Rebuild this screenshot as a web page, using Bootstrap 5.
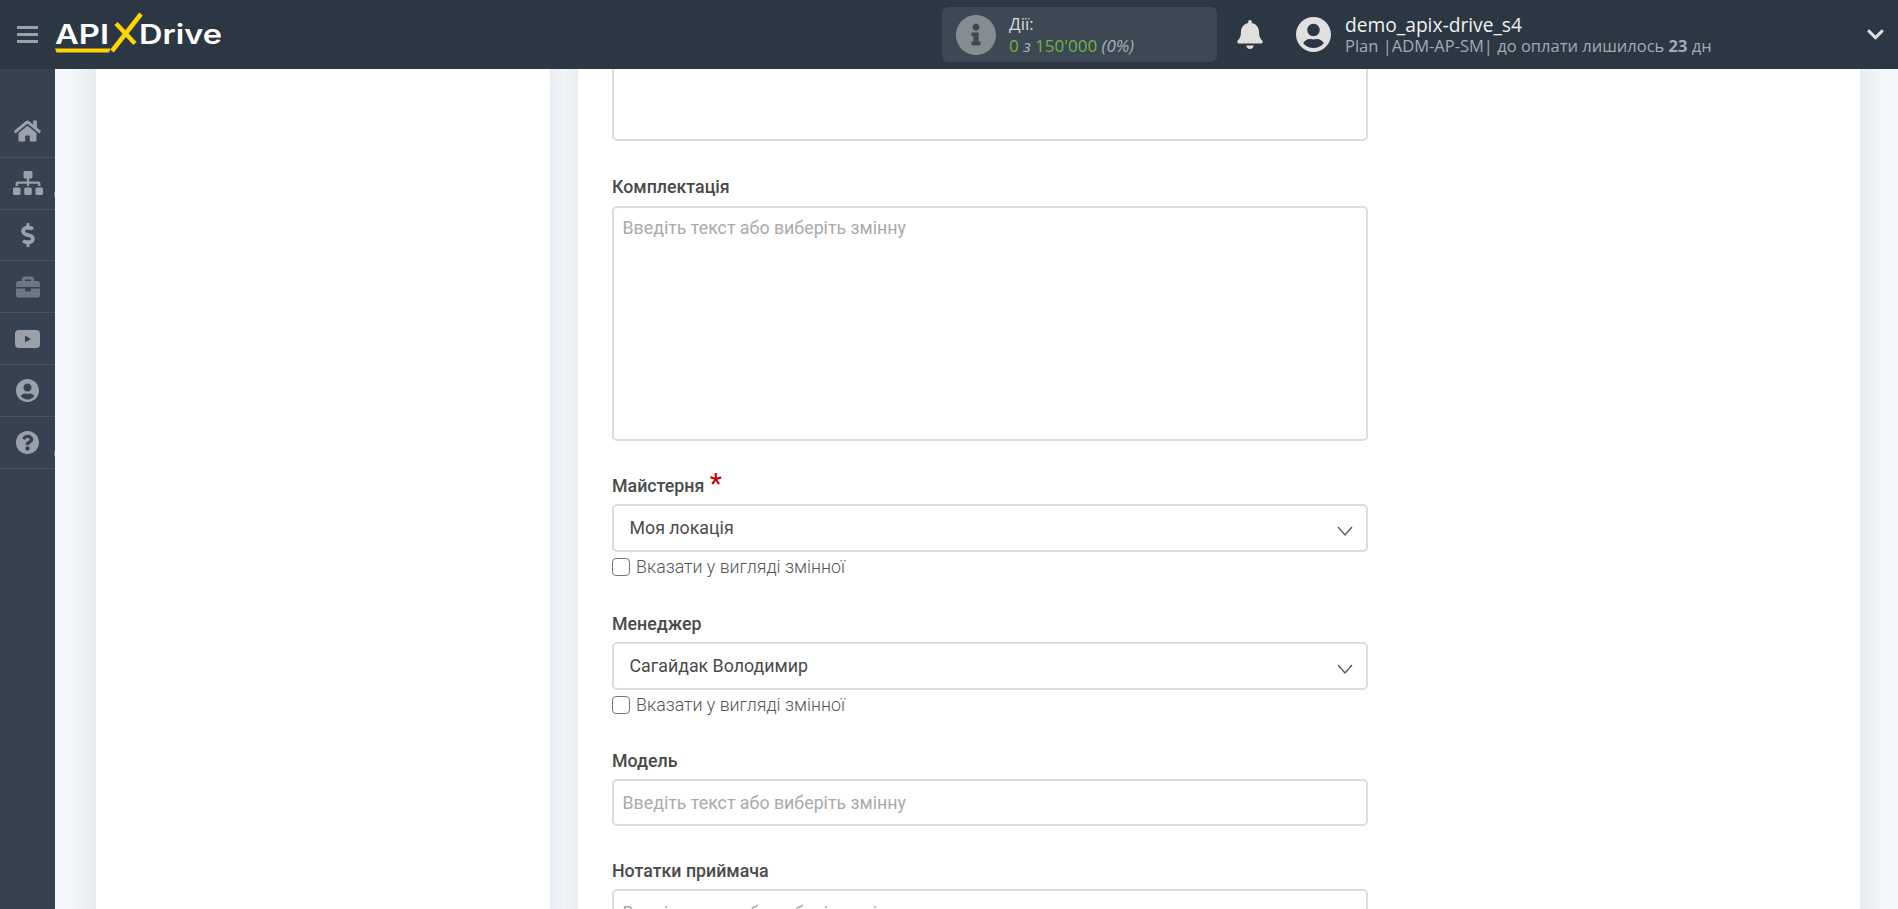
<!DOCTYPE html>
<html lang="uk">
<head>
<meta charset="utf-8">
<title>ApiX-Drive</title>
<link href="https://cdn.jsdelivr.net/npm/bootstrap@5.3.0/dist/css/bootstrap.min.css" rel="stylesheet">
<style>
html,body{height:100%;overflow:hidden}
body{font-family:Roboto,"Liberation Sans",sans-serif;background:#f3f6fb}
.top-bar{height:69px;background:#2c3744;font-family:"Open Sans","Liberation Sans",sans-serif}
.burger{width:21px;margin-left:17px;margin-right:17px}
.burger i{display:block;height:3.5px;background:#9ba1a8;margin-bottom:3.5px}
.burger i:last-child{margin-bottom:0}
.brand{width:170px;height:44px;margin-top:-4px}
.brand text{font-family:Inter,"Liberation Sans",sans-serif;font-weight:600;fill:#fff}
.action-box{width:275px;height:55px;margin-left:717px;background:#3c4853;border-radius:6px;padding-left:14px}
.action-box svg{width:40px;height:40px;fill:#858c92}
.action-txt{margin-left:13px;font-size:17px;line-height:22px;color:#d9dcdf}
.action-num{color:#77b341}
.action-mut{color:#a9afb5;font-style:italic}
.bell{width:26px;height:29px;fill:#e0e0e0;margin-left:20px}
.avatar{width:35px;height:35px;fill:#e0e0e0;margin-left:33px}
.user-txt{margin-left:14px}
.user-name{font-size:19.2px;line-height:22px;color:#f0f1f2}
.user-plan{font-size:16.5px;line-height:20px;color:#a4aab0}
.user-plan b{font-weight:700}
.caret-down{width:19px;height:19px;fill:#e0e0e0;margin-left:auto;margin-right:13px}
.page-body{height:840px}
.side-nav{width:55px;background:#364250;padding-top:37px;flex:none}
.side-item{height:51.8px;border-bottom:1px solid #49545f;position:relative}
.side-item svg{fill:#9ba1a8}
.side-item.dim svg{fill:#6f7783}
.side-item.tick::after{content:"";position:absolute;right:0;top:34px;width:1px;height:5px;background:#7d858d}
.work-area{padding-left:41px;padding-right:38px;background:linear-gradient(90deg,#f3f6fb 0,#f3f6fb 16px,#e8ebf0 41px,#e8ebf0 calc(100% - 38px),#f3f6fb calc(100% - 14px))}
.panel-left{width:454px;background:#fff;flex:none}
.panel-gap{width:28px;background:linear-gradient(90deg,#e9edf2,#f1f4f9 50%,#e9edf2);flex:none}
.panel-main{flex:1 1 auto;background:#fff;padding-left:34px;overflow:hidden}
.form-wrap{width:756px}
.fld-label{font-size:17.8px;font-weight:500;line-height:24px;color:#4a4a4a;margin:0 0 7px;display:block}
.req{color:#c8000a;font-size:27px;line-height:16px;vertical-align:-1px;margin-left:1px}
.form-control.fld,.form-select.fld{border:2px solid #dcdcdc;border-radius:5px;font-size:17.8px;color:#4a4a4a;box-shadow:none}
.form-control.fld{padding:6px 8.5px}
textarea.form-control.fld{padding-top:7px}
.form-control.fld::placeholder{color:#aaa;opacity:1}
.form-select.fld{height:48px;padding:6px 40px 6px 15.5px;background-position:right 13px top 20px;background-size:16px 10px;background-image:url("data:image/svg+xml,%3csvg xmlns='http://www.w3.org/2000/svg' viewBox='0 0 16 10'%3e%3cpath fill='none' stroke='%23555555' stroke-width='1.2' d='M1 1l7 8 7-8'/%3e%3c/svg%3e")}
textarea.fld{resize:none}
.area-cut{height:92px;margin-top:-20px}
.area-big{height:235px}
.inp-tall{height:47px}
.grp-a{margin-top:34px}
.grp-b{margin-top:33px}
.grp-c{margin-top:33px}
.grp-d{margin-top:32px}
.lbl-tight{margin-bottom:6px}
.var-check{margin:3px 0 0;min-height:0;padding:0;display:flex;align-items:center;line-height:24px}
.var-check .form-check-input{float:none;margin:0;width:18px;height:18px;border:1.5px solid #777;border-radius:4px;box-shadow:none}
.var-check .form-check-label{margin-left:6px;font-size:17.8px;font-weight:300;color:#555}
</style>
</head>
<body>
<header class="top-bar d-flex align-items-center">
  <div class="burger"><i></i><i></i><i></i></div>
  <svg class="brand" viewBox="0 0 170 44">
    <text x="0" y="32.500" font-size="27.5" textLength="54" lengthAdjust="spacingAndGlyphs">API</text>
    <path d="M0 37.500h55.500l-1.500 4H1.500z" fill="#ffd400"/>
    <path d="M57 40L86 3" stroke="#ffd400" stroke-width="4.500" fill="none"/>
    <path d="M61 12.500L80 32.500" stroke="#ffd400" stroke-width="4.500" fill="none"/>
    <text x="84" y="32.500" font-size="27.500" textLength="83" lengthAdjust="spacingAndGlyphs">Drive</text>
  </svg>
  <div class="action-box d-flex align-items-center">
    <svg viewBox="8 8 496 496"><path d="M256 8C119.043 8 8 119.083 8 256c0 136.997 111.043 248 248 248s248-111.003 248-248C504 119.083 392.957 8 256 8zm0 110c23.196 0 42 18.804 42 42s-18.804 42-42 42-42-18.804-42-42 18.804-42 42-42zm56 254c0 6.627-5.373 12-12 12h-88c-6.627 0-12-5.373-12-12v-24c0-6.627 5.373-12 12-12h12v-64h-12c-6.627 0-12-5.373-12-12v-24c0-6.627 5.373-12 12-12h64c6.627 0 12 5.373 12 12v100h12c6.627 0 12 5.373 12 12v24z"/></svg>
    <div class="action-txt">
      <div>Дії:</div>
      <div><span class="action-num">0</span> <span class="action-mut">з</span> <span class="action-num">150'000</span> <span class="action-mut">(0%)</span></div>
    </div>
  </div>
  <svg class="bell" viewBox="0 0 448 512"><path d="M224 512c35.32 0 63.97-28.65 63.97-64H160.03c0 35.35 28.65 64 63.97 64zm215.39-149.71c-19.32-20.76-55.47-51.99-55.47-154.29 0-77.7-54.48-139.9-127.94-155.16V32c0-17.67-14.32-32-31.98-32s-31.98 14.33-31.98 32v20.84C118.56 68.1 64.08 130.3 64.08 208c0 102.3-36.15 133.53-55.47 154.29-6 6.45-8.66 14.16-8.61 21.71.11 16.4 12.98 32 32.1 32h383.8c19.12 0 32-15.6 32.1-32 .05-7.55-2.61-15.27-8.61-21.71z"/></svg>
  <svg class="avatar" viewBox="0 8 496 496"><path d="M248 8C111 8 0 119 0 256s111 248 248 248 248-111 248-248S385 8 248 8zm0 96c48.6 0 88 39.4 88 88s-39.4 88-88 88-88-39.4-88-88 39.4-88 88-88zm0 344c-58.7 0-111.3-26.6-146.5-68.2 18.8-35.4 55.6-59.8 98.5-59.8 2.4 0 4.8.4 7.1 1.1 13 4.2 26.6 6.9 40.9 6.9 14.3 0 28-2.7 40.9-6.9 2.3-.7 4.7-1.1 7.1-1.1 42.9 0 79.7 24.4 98.5 59.8C359.3 421.4 306.7 448 248 448z"/></svg>
  <div class="user-txt">
    <div class="user-name">demo_apix-drive_s4</div>
    <div class="user-plan">Plan |ADM-AP-SM| до оплати лишилось <b>23</b> дн</div>
  </div>
  <svg class="caret-down" viewBox="0 0 448 512"><path d="M207.029 381.476L12.686 187.132c-9.373-9.373-9.373-24.569 0-33.941l22.667-22.667c9.357-9.357 24.522-9.375 33.901-.04L224 284.505l154.745-154.021c9.379-9.335 24.544-9.317 33.901.04l22.667 22.667c9.373 9.373 9.373 24.569 0 33.941L240.971 381.476c-9.373 9.372-24.569 9.372-33.942 0z"/></svg>
</header>
<div class="page-body d-flex">
  <nav class="side-nav">
    <div class="side-item d-flex align-items-center justify-content-center"><svg width="27" height="24" viewBox="0 0 576 512"><path d="M280.37 148.26L96 300.11V464a16 16 0 0 0 16 16l112.06-.29a16 16 0 0 0 15.92-16V368a16 16 0 0 1 16-16h64a16 16 0 0 1 16 16v95.64a16 16 0 0 0 16 16.05L464 480a16 16 0 0 0 16-16V300L295.67 148.26a12.19 12.19 0 0 0-15.3 0zM571.6 251.47L488 182.56V44.05a12 12 0 0 0-12-12h-56a12 12 0 0 0-12 12v72.61L318.47 43a48 48 0 0 0-61 0L4.34 251.47a12 12 0 0 0-1.6 16.9l25.5 31A12 12 0 0 0 45.15 301l235.22-193.74a12.19 12.19 0 0 1 15.3 0L530.9 301a12 12 0 0 0 16.9-1.6l25.5-31a12 12 0 0 0-1.7-16.93z"/></svg></div>
    <div class="side-item tick d-flex align-items-center justify-content-center"><svg width="30" height="24" viewBox="0 0 640 512"><path d="M128 352H32c-17.67 0-32 14.33-32 32v96c0 17.67 14.33 32 32 32h96c17.67 0 32-14.33 32-32v-96c0-17.67-14.33-32-32-32zm-24-80h192v48h48v-48h192v48h48v-57.59c0-21.17-17.23-38.41-38.41-38.41H344v-64h40c17.67 0 32-14.33 32-32V32c0-17.67-14.33-32-32-32H256c-17.67 0-32 14.33-32 32v96c0 17.67 14.33 32 32 32h40v64H94.41C73.23 224 56 241.23 56 262.41V320h48v-48zm264 80h-96c-17.67 0-32 14.33-32 32v96c0 17.67 14.33 32 32 32h96c17.67 0 32-14.33 32-32v-96c0-17.67-14.33-32-32-32zm240 0h-96c-17.67 0-32 14.33-32 32v96c0 17.67 14.33 32 32 32h96c17.67 0 32-14.33 32-32v-96c0-17.67-14.33-32-32-32z"/></svg></div>
    <div class="side-item d-flex align-items-center justify-content-center"><svg width="14" height="24" viewBox="0 0 288 512"><path d="M209.2 233.4l-108-31.6C88.7 198.2 80 186.5 80 173.5c0-16.3 13.2-29.5 29.5-29.5h66.3c12.2 0 24.2 3.7 34.2 10.5 6.1 4.1 14.3 3.1 19.5-2l34.8-34c7.1-6.9 6.1-18.4-1.8-24.5C238 74.8 207.4 64.1 176 64V16c0-8.8-7.2-16-16-16h-32c-8.8 0-16 7.2-16 16v48h-2.5C45.8 64-5.4 118.7.5 183.6c4.2 46.1 39.4 83.6 83.8 96.6l102.5 30c12.5 3.7 21.2 15.3 21.2 28.3 0 16.3-13.2 29.5-29.5 29.5h-66.3C100 368 88 364.3 78 357.5c-6.1-4.1-14.3-3.1-19.5 2l-34.8 34c-7.1 6.9-6.1 18.4 1.8 24.5 24.5 19.2 55.1 29.9 86.5 30v48c0 8.8 7.2 16 16 16h32c8.8 0 16-7.2 16-16v-48.2c46.6-.9 90.3-28.6 105.7-72.7 21.5-61.6-14.6-124.8-72.5-141.7z"/></svg></div>
    <div class="side-item dim d-flex align-items-center justify-content-center"><svg width="24" height="24" viewBox="0 0 512 512"><path d="M320 336c0 8.84-7.16 16-16 16h-96c-8.84 0-16-7.16-16-16v-48H0v144c0 25.6 22.4 48 48 48h416c25.6 0 48-22.4 48-48V288H320v48zm144-208h-80V80c0-25.6-22.4-48-48-48H176c-25.6 0-48 22.4-48 48v48H48c-25.6 0-48 22.4-48 48v80h512v-80c0-25.6-22.4-48-48-48zm-144 0H192V96h128v32z"/></svg></div>
    <div class="side-item d-flex align-items-center justify-content-center"><svg width="25" height="18" viewBox="0 0 25 18"><path fill-rule="evenodd" d="M4 0h17a4 4 0 0 1 4 4v10a4 4 0 0 1-4 4H4a4 4 0 0 1-4-4V4a4 4 0 0 1 4-4zm6 5.500v7l6-3.500z"/></svg></div>
    <div class="side-item d-flex align-items-center justify-content-center"><svg width="23" height="23" viewBox="0 8 496 496"><path d="M248 8C111 8 0 119 0 256s111 248 248 248 248-111 248-248S385 8 248 8zm0 96c48.6 0 88 39.4 88 88s-39.4 88-88 88-88-39.4-88-88 39.4-88 88-88zm0 344c-58.7 0-111.3-26.6-146.5-68.2 18.8-35.4 55.6-59.8 98.5-59.8 2.4 0 4.8.4 7.1 1.1 13 4.2 26.6 6.9 40.9 6.9 14.3 0 28-2.7 40.9-6.9 2.3-.7 4.7-1.1 7.1-1.1 42.9 0 79.7 24.4 98.5 59.8C359.3 421.4 306.7 448 248 448z"/></svg></div>
    <div class="side-item tick d-flex align-items-center justify-content-center"><svg width="23" height="23" viewBox="8 8 496 496"><path d="M504 256c0 136.997-111.043 248-248 248S8 392.997 8 256C8 119.083 119.043 8 256 8s248 111.083 248 248zM262.655 90c-54.497 0-89.255 22.957-116.549 63.758-3.536 5.286-2.353 12.415 2.715 16.258l34.699 26.31c5.205 3.947 12.621 3.008 16.665-2.122 17.864-22.658 30.113-35.797 57.303-35.797 20.429 0 45.698 13.148 45.698 32.958 0 14.976-12.363 22.667-32.534 33.976C247.128 238.528 216 254.941 216 296v4c0 6.627 5.373 12 12 12h56c6.627 0 12-5.373 12-12v-1.333c0-28.462 83.186-29.647 83.186-106.667 0-58.002-60.165-102-116.531-102zM256 338c-25.365 0-46 20.635-46 46 0 25.364 20.635 46 46 46s46-20.636 46-46c0-25.365-20.635-46-46-46z"/></svg></div>
  </nav>
  <main class="work-area d-flex flex-grow-1">
    <div class="panel-left"></div>
    <div class="panel-gap"></div>
    <div class="panel-main">
      <form class="form-wrap">
        <textarea class="form-control fld area-cut"></textarea>
        <div class="grp-a">
          <label class="fld-label">Комплектація</label>
          <textarea class="form-control fld area-big" placeholder="Введіть текст або виберіть змінну"></textarea>
        </div>
        <div class="grp-b">
          <label class="fld-label lbl-tight">Майстерня <span class="req">*</span></label>
          <select class="form-select fld"><option>Моя локація</option></select>
          <div class="form-check var-check"><input class="form-check-input" type="checkbox"><label class="form-check-label">Вказати у вигляді змінної</label></div>
        </div>
        <div class="grp-c">
          <label class="fld-label lbl-tight">Менеджер</label>
          <select class="form-select fld"><option>Сагайдак Володимир</option></select>
          <div class="form-check var-check"><input class="form-check-input" type="checkbox"><label class="form-check-label">Вказати у вигляді змінної</label></div>
        </div>
        <div class="grp-d">
          <label class="fld-label lbl-tight">Модель</label>
          <input class="form-control fld inp-tall" placeholder="Введіть текст або виберіть змінну">
        </div>
        <div class="grp-c">
          <label class="fld-label lbl-tight">Нотатки приймача</label>
          <input class="form-control fld inp-tall" placeholder="Введіть текст або виберіть змінну">
        </div>
      </form>
    </div>
  </main>
</div>
<script src="https://cdn.jsdelivr.net/npm/bootstrap@5.3.0/dist/js/bootstrap.bundle.min.js"></script>
</body>
</html>
